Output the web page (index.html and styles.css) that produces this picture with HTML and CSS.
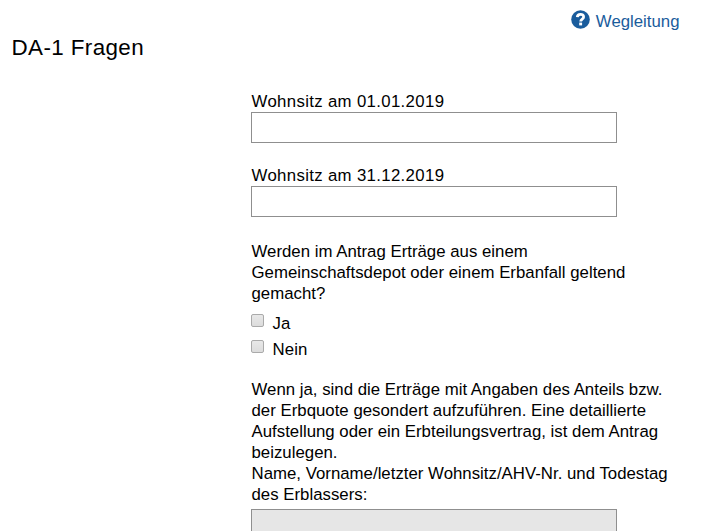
FILE: index.html
```html
<!DOCTYPE html>
<html lang="de">
<head>
<meta charset="utf-8">
<title>DA-1 Fragen</title>
<link rel="stylesheet" href="styles.css">
</head>
<body>
<header class="top">
<a class="guide"><svg class="help" viewBox="0 0 19 19"><circle cx="9.5" cy="9.5" r="9.3" fill="#1a5c9c"/><path d="M6.3 7.2C6.6 3.5 12.6 3.5 12.6 6.9C12.6 9.2 9.7 9 9.7 11.5" fill="none" stroke="#fff" stroke-width="2.8"/><rect x="8.2" y="12.6" width="2.9" height="2.8" fill="#fff"/></svg><span class="guide-text">Wegleitung</span></a>
</header>
<h1 class="title">DA-1 Fragen</h1>
<form class="form">
<label class="field"><span>Wohnsitz am 01.01.2019</span><input class="input" type="text"></label>
<label class="field"><span>Wohnsitz am 31.12.2019</span><input class="input" type="text"></label>
<p class="text">Werden im Antrag Erträge aus einem<br>Gemeinschaftsdepot oder einem Erbanfall geltend<br>gemacht?</p>
<label class="option"><span class="box"></span><span>Ja</span></label>
<label class="option"><span class="box"></span><span>Nein</span></label>
<p class="text note">Wenn ja, sind die Erträge mit Angaben des Anteils bzw.<br>der Erbquote gesondert aufzuführen. Eine detaillierte<br>Aufstellung oder ein Erbteilungsvertrag, ist dem Antrag<br>beizulegen.<br>Name, Vorname/letzter Wohnsitz/AHV-Nr. und Todestag<br>des Erblassers:</p>
<input class="input disabled" type="text" disabled>
</form>
</body>
</html>
```
FILE: styles.css
```css
* { box-sizing: border-box; }
body { margin: 0; height: 531px; overflow: hidden; background: #fff; color: #000; font: 16.8px/21px "Liberation Sans", Arial, sans-serif; }
.top { display: flex; justify-content: flex-end; height: 34px; padding: 10px 23.5px 0 0; }
.guide { display: flex; gap: 5.5px; height: 21px; color: #1a5c9c; }
.help { width: 19px; height: 19px; }
.guide-text { padding-top: 1px; }
.title { margin: 0 0 0 11.5px; font-size: 22.4px; line-height: 28px; font-weight: 400; letter-spacing: .4px; }
.form { width: 450px; margin: 29px 0 0 251px; }
.field { display: block; height: 74px; }
.field > span { display: block; padding-left: .5px; letter-spacing: .34px; }
.input { display: block; width: 366px; height: 31px; margin: 0; border: 1px solid #8f8f8f; background: #fff; }
.text { margin: 2px 0 0; height: 63px; padding-left: .5px; letter-spacing: .015px; white-space: nowrap; }
.option { display: flex; align-items: center; height: 26px; gap: 8.5px; letter-spacing: .1px; }
.text + .option { margin-top: 6px; }
.box { width: 13px; height: 13px; margin-top: -5px; border: 1px solid #aaa; border-radius: 2px; background: linear-gradient(#e8e8e8, #dcdcdc); }
.note { height: 126px; margin-top: 17px; }
.disabled { margin-top: 4px; background: #e6e6e6; }
```
